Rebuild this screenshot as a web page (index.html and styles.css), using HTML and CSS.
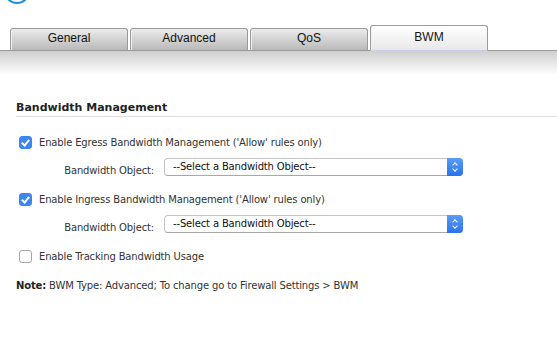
FILE: index.html
```html
<!DOCTYPE html>
<html lang="en">
<head>
    <meta charset="UTF-8">
    <title>BWM Settings</title>
    <link rel="stylesheet" href="styles.css">
</head>
<body>
    <div class="top">
        <div class="logo"></div>
    </div>
    <div class="tabbar">
        <div class="tab">General</div>
        <div class="tab">Advanced</div>
        <div class="tab">QoS</div>
        <div class="tab active">BWM</div>
    </div>
    <div class="shade"></div>

    <div class="content">
        <h2 class="section">Bandwidth Management</h2>

        <label class="check">
            <span class="box on"></span>
            Enable Egress Bandwidth Management ('Allow' rules only)
        </label>
        <div class="field">
            <span class="label">Bandwidth Object:</span>
            <div class="select">--Select a Bandwidth Object--<span class="arrow"></span></div>
        </div>

        <label class="check">
            <span class="box on"></span>
            Enable Ingress Bandwidth Management ('Allow' rules only)
        </label>
        <div class="field">
            <span class="label">Bandwidth Object:</span>
            <div class="select">--Select a Bandwidth Object--<span class="arrow"></span></div>
        </div>

        <label class="check">
            <span class="box"></span>
            Enable Tracking Bandwidth Usage
        </label>

        <p class="note"><b>Note:</b> BWM Type: Advanced; To change go to Firewall Settings &gt; BWM</p>
    </div>
</body>
</html>
```

FILE: styles.css
```css
body {
    margin: 0;
    background: #ffffff;
    font-family: "DejaVu Sans", Verdana, sans-serif;
    font-size: 10px;
    letter-spacing: -0.15px;
    color: #333333;
    overflow: hidden;
}

.top {
    height: 25px;
    position: relative;
    overflow: hidden;
}

.logo {
    position: absolute;
    left: 4px;
    top: -22px;
    width: 22px;
    height: 22px;
    border: 2px solid #1e8fd6;
    border-radius: 50%;
}

.tabbar {
    display: flex;
    align-items: flex-end;
    padding-left: 10px;
    height: 25px;
    border-bottom: 1px solid #9a9a9a;
}

.tab {
    width: 116px;
    height: 21px;
    margin-right: 2px;
    border: 1px solid #9a9a9a;
    border-bottom: none;
    border-radius: 3px 3px 0 0;
    background: linear-gradient(#ececec, #b9b9b9);
    font-family: "Liberation Sans", Arial, sans-serif;
    font-size: 12px;
    letter-spacing: 0;
    color: #111111;
    text-align: center;
    line-height: 18px;
    box-shadow: inset 1px 0 0 #f4f4f4;
}

.tab.active {
    height: 24px;
    line-height: 22px;
    background: linear-gradient(#ffffff, #e8e8e8);
    border-bottom: 1px solid #c9cde6;
    margin-bottom: -1px;
}

.shade {
    height: 24px;
    background: linear-gradient(#cfcfcf, #ffffff);
}

.content {
    padding: 0 0 0 16px;
}

.section {
    margin: 26px 0 18px;
    padding-bottom: 2px;
    border-bottom: 1px solid #dddddd;
    font-size: 11px;
    font-weight: bold;
    letter-spacing: 0;
    color: #222222;
}

.check {
    display: flex;
    align-items: center;
    gap: 7px;
    height: 14px;
    margin: 16px 0 0 3px;
}

.box {
    width: 11px;
    height: 11px;
    border: 1px solid #a8a8a8;
    border-radius: 3px;
    background: #ffffff;
    position: relative;
}

.box.on {
    background: #3b86f0;
    border-color: #3b86f0;
}

.box.on::after {
    content: "";
    position: absolute;
    left: 3px;
    top: 1px;
    width: 3px;
    height: 6px;
    border: solid #ffffff;
    border-width: 0 2px 2px 0;
    transform: rotate(40deg);
}

.field {
    display: flex;
    align-items: flex-end;
    margin-top: 9px;
}

.label {
    width: 148px;
    padding-right: 10px;
    text-align: right;
    box-sizing: border-box;
    line-height: 12px;
    margin-bottom: -1px;
}

.select {
    position: relative;
    width: 299px;
    height: 18px;
    box-sizing: border-box;
    padding-left: 8px;
    border: 1px solid #c4c4c4;
    border-bottom-color: #a8a8a8;
    border-radius: 4px;
    line-height: 16px;
    color: #111111;
}

.arrow {
    position: absolute;
    right: -1px;
    top: -1px;
    width: 16px;
    height: 18px;
    border-radius: 0 4px 4px 0;
    background: linear-gradient(#5a9cf8, #2a72ee);
}

.arrow::before,
.arrow::after {
    content: "";
    position: absolute;
    left: 6px;
    width: 3px;
    height: 3px;
    border: solid #ffffff;
    border-width: 1.5px 0 0 1.5px;
}

.arrow::before {
    top: 5px;
    transform: rotate(45deg);
}

.arrow::after {
    top: 9px;
    transform: rotate(225deg);
}

.note {
    margin: 17px 0 0;
}

.note b {
    color: #222222;
}
```
